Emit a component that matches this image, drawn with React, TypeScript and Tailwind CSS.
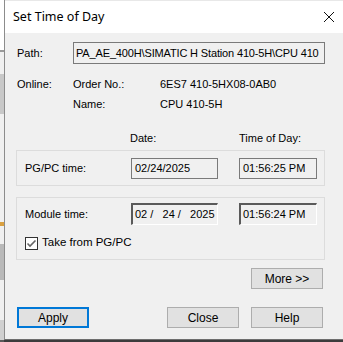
import React from 'react';

// Win32 style "Set Time of Day" dialog
const sans = { fontFamily: '"Liberation Sans", Arial, sans-serif' };

function Btn({ label, focused }: { label: string; focused?: boolean }) {
    return (
        <button
            className={
                "w-[72px] h-[21px] bg-[#e1e1e1] text-[12px] text-black flex items-center justify-center " +
                (focused ? "border-2 border-[#0078d7]" : "border border-[#adadad]")
            }
        >
            {label}
        </button>
    );
}

function ReadBox({ value, w }: { value: string; w: string }) {
    return (
        <div className={"h-[21px] border border-[#7a7a7a] bg-[#f0f0f0] flex items-center pl-[3px] " + w}>
            {value}
        </div>
    );
}

function SunkenBox({ children, w }: { children: React.ReactNode; w: string }) {
    return (
        <div className={"h-[22px] border-t-2 border-l-2 border-[#5a5a5a] border-r border-r-white border-b border-b-white bg-[#f0f0f0] flex items-center pl-[2px] " + w}>
            {children}
        </div>
    );
}

export default function App() {
    return (
        <div className="w-[343px] h-[342px] flex bg-[#3c3c3c] overflow-hidden text-[11px] text-black" style={sans}>
            {/* window behind */}
            <div className="w-[4px] h-full flex flex-col bg-[#f0f0f0]">
                <div className="h-[50px] bg-white" />
                <div className="h-[2px] bg-[#9a9a9a]" />
                <div className="h-[22px]" />
                <div className="h-[40px] bg-[#c8c8c8]" />
                <div className="h-[108px]" />
                <div className="h-[4px] bg-[#d9a040]" />
                <div className="h-[18px]" />
                <div className="h-[36px] bg-[#b9b9b9]" />
                <div className="h-[40px]" />
                <div className="h-[20px] bg-[#d0d0d0]" />
                <div className="flex-1 bg-[#5a5a5a]" />
            </div>

            {/* dialog */}
            <div className="flex-1 h-[340px] border-l border-[#8c8c8c] border-b border-b-[#6e6e6e] bg-[#f0f0f0] flex flex-col">
                {/* title bar */}
                <div className="h-[33px] bg-white flex items-center pl-[8px] border-t border-[#e8e8e8]">
                    <span className="text-[12.5px] text-black" style={{ fontFamily: '"Noto Sans", "Open Sans", sans-serif' }}>
                        Set Time of Day
                    </span>
                    <svg className="ml-auto mr-[8px]" width="12" height="12" viewBox="0 0 12 12">
                        <path d="M1 1 L11 11 M11 1 L1 11" stroke="#111" strokeWidth="1" fill="none" />
                    </svg>
                </div>

                <div className="flex flex-col pl-[11px]">
                    {/* path */}
                    <div className="h-[22px] mt-[9px] flex items-center">
                        <span className="w-[57px] pl-[1px]">Path:</span>
                        <div className="w-[252px] h-[22px] border border-[#7a7a7a] bg-[#f0f0f0] flex items-center pl-[2px] overflow-hidden whitespace-nowrap text-[11px] tracking-[-0.15px]">
                            PA_AE_400H\SIMATIC H Station 410-5H\CPU 410
                        </div>
                    </div>

                    {/* online info */}
                    <div className="h-[20px] mt-[10px] flex items-center">
                        <span className="w-[57px] pl-[1px]">Online:</span>
                        <span className="w-[87px]">Order No.:</span>
                        <span>6ES7 410-5HX08-0AB0</span>
                    </div>
                    <div className="h-[20px] flex items-center">
                        <span className="w-[57px]" />
                        <span className="w-[87px]">Name:</span>
                        <span>CPU 410-5H</span>
                    </div>

                    {/* column headers */}
                    <div className="h-[20px] mt-[14px] flex items-center">
                        <span className="w-[114px]" />
                        <span className="w-[109px]">Date:</span>
                        <span>Time of Day:</span>
                    </div>

                    {/* PG/PC time */}
                    <div className="w-[309px] h-[36px] mt-[2px] border border-[#dcdcdc] flex items-center pl-[8px]">
                        <span className="w-[106px]">PG/PC time:</span>
                        <ReadBox value="02/24/2025" w="w-[87px]" />
                        <div className="w-[21px]" />
                        <ReadBox value="01:56:25 PM" w="w-[78px]" />
                    </div>

                    {/* module time */}
                    <div className="w-[309px] h-[63px] mt-[11px] border border-[#dcdcdc] flex flex-col pl-[8px]">
                        <div className="h-[22px] mt-[5px] flex items-center">
                            <span className="w-[106px]">Module time:</span>
                            <SunkenBox w="w-[87px]">
                                <span className="whitespace-pre">02 /   24 /   2025</span>
                            </SunkenBox>
                            <div className="w-[21px]" />
                            <SunkenBox w="w-[78px]">
                                <span>01:56:24 PM</span>
                            </SunkenBox>
                        </div>
                        <div className="h-[14px] mt-[11px] flex items-center">
                            <div className="w-[13px] h-[13px] border border-[#333] bg-white flex items-center justify-center">
                                <svg width="11" height="11" viewBox="0 0 11 11">
                                    <path d="M1.5 5.5 L4 8 L9.5 2.5" stroke="#666" strokeWidth="1.6" fill="none" />
                                </svg>
                            </div>
                            <span className="ml-[4px] text-[11.5px]">Take from PG/PC</span>
                        </div>
                    </div>

                    {/* more */}
                    <div className="w-[309px] flex justify-end mt-[8px] pr-[2px]">
                        <Btn label="More >>" />
                    </div>

                    {/* bottom buttons */}
                    <div className="w-[309px] flex items-center mt-[18px] pl-[1px] pr-[2px]">
                        <Btn label="Apply" focused />
                        <div className="ml-auto flex gap-[12px]">
                            <Btn label="Close" />
                            <Btn label="Help" />
                        </div>
                    </div>
                </div>
            </div>
        </div>
    );
}
